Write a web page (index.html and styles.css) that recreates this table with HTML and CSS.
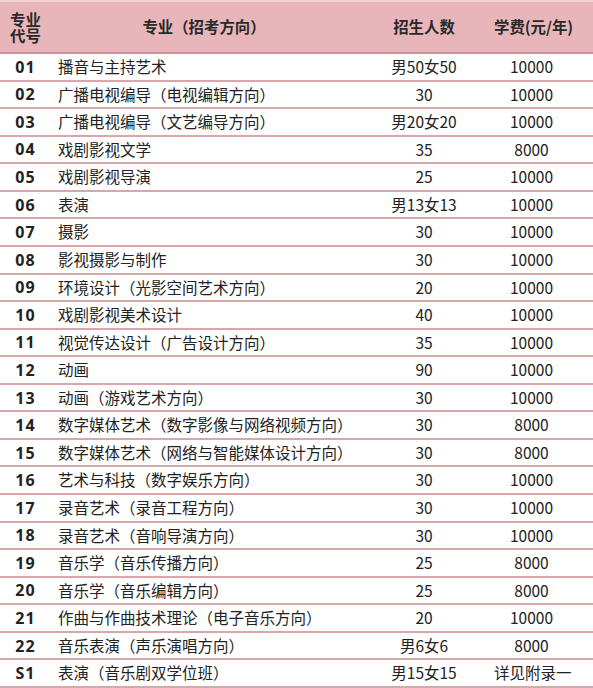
FILE: index.html
```html
<!DOCTYPE html>
<html lang="zh">
<head>
<meta charset="utf-8">
<link rel="stylesheet" href="styles.css">
</head>
<body>
<div class="table">
  <div class="row head">
    <div class="c code"><div class="two"><div>专业</div><div>代号</div></div></div>
    <div class="c name-h">专业（招考方向）</div>
    <div class="c num">招生人数</div>
    <div class="c fee">学费(元/年)</div>
  </div>
  <div class="row"><div class="c code">01</div><div class="c name">播音与主持艺术</div><div class="c num">男50女50</div><div class="c fee">10000</div></div>
  <div class="row"><div class="c code">02</div><div class="c name">广播电视编导（电视编辑方向）</div><div class="c num">30</div><div class="c fee">10000</div></div>
  <div class="row"><div class="c code">03</div><div class="c name">广播电视编导（文艺编导方向）</div><div class="c num">男20女20</div><div class="c fee">10000</div></div>
  <div class="row"><div class="c code">04</div><div class="c name">戏剧影视文学</div><div class="c num">35</div><div class="c fee">8000</div></div>
  <div class="row"><div class="c code">05</div><div class="c name">戏剧影视导演</div><div class="c num">25</div><div class="c fee">10000</div></div>
  <div class="row"><div class="c code">06</div><div class="c name">表演</div><div class="c num">男13女13</div><div class="c fee">10000</div></div>
  <div class="row"><div class="c code">07</div><div class="c name">摄影</div><div class="c num">30</div><div class="c fee">10000</div></div>
  <div class="row"><div class="c code">08</div><div class="c name">影视摄影与制作</div><div class="c num">30</div><div class="c fee">10000</div></div>
  <div class="row"><div class="c code">09</div><div class="c name">环境设计（光影空间艺术方向）</div><div class="c num">20</div><div class="c fee">10000</div></div>
  <div class="row"><div class="c code">10</div><div class="c name">戏剧影视美术设计</div><div class="c num">40</div><div class="c fee">10000</div></div>
  <div class="row"><div class="c code">11</div><div class="c name">视觉传达设计（广告设计方向）</div><div class="c num">35</div><div class="c fee">10000</div></div>
  <div class="row"><div class="c code">12</div><div class="c name">动画</div><div class="c num">90</div><div class="c fee">10000</div></div>
  <div class="row"><div class="c code">13</div><div class="c name">动画（游戏艺术方向）</div><div class="c num">30</div><div class="c fee">10000</div></div>
  <div class="row"><div class="c code">14</div><div class="c name">数字媒体艺术（数字影像与网络视频方向）</div><div class="c num">30</div><div class="c fee">8000</div></div>
  <div class="row"><div class="c code">15</div><div class="c name">数字媒体艺术（网络与智能媒体设计方向）</div><div class="c num">30</div><div class="c fee">8000</div></div>
  <div class="row"><div class="c code">16</div><div class="c name">艺术与科技（数字娱乐方向）</div><div class="c num">30</div><div class="c fee">10000</div></div>
  <div class="row"><div class="c code">17</div><div class="c name">录音艺术（录音工程方向）</div><div class="c num">30</div><div class="c fee">10000</div></div>
  <div class="row"><div class="c code">18</div><div class="c name">录音艺术（音响导演方向）</div><div class="c num">30</div><div class="c fee">10000</div></div>
  <div class="row"><div class="c code">19</div><div class="c name">音乐学（音乐传播方向）</div><div class="c num">25</div><div class="c fee">8000</div></div>
  <div class="row"><div class="c code">20</div><div class="c name">音乐学（音乐编辑方向）</div><div class="c num">25</div><div class="c fee">8000</div></div>
  <div class="row"><div class="c code">21</div><div class="c name">作曲与作曲技术理论（电子音乐方向）</div><div class="c num">20</div><div class="c fee">10000</div></div>
  <div class="row"><div class="c code">22</div><div class="c name">音乐表演（声乐演唱方向）</div><div class="c num">男6女6</div><div class="c fee">8000</div></div>
  <div class="row"><div class="c code">S1</div><div class="c name">表演（音乐剧双学位班）</div><div class="c num">男15女15</div><div class="c fee">详见附录一</div></div>
</div>
</body>
</html>
```
FILE: styles.css
```css
html, body {
  margin: 0;
  padding: 0;
  background: #ffffff;
}
body {
  width: 593px;
  height: 688px;
  overflow: hidden;
  font-family: "Noto Sans CJK SC", "Noto Sans", sans-serif;
  color: #222222;
}
.table {
  display: flex;
  flex-direction: column;
}
.row {
  display: grid;
  grid-template-columns: 50px 304px 140px 99px;
  height: 27.57px;
  box-sizing: border-box;
  border-bottom: 2px solid #d9a6aa;
  align-items: center;
  font-size: 15.5px;
  line-height: 1;
}
.row.head {
  height: 54px;
  background: #e8b6ba;
  border-top: 2px solid #f1d2d4;
  border-bottom: 2px solid #cf9297;
  font-weight: 700;
  font-size: 15.4px;
  color: #2a2a2a;
}
.c {
  white-space: nowrap;
}
.code {
  text-align: center;
  font-weight: 700;
  font-family: "Open Sans", "Noto Sans", sans-serif;
  font-size: 16px;
  letter-spacing: 1px;
  padding-left: 1px;
}
.head .code {
  font-family: "Noto Sans CJK SC", sans-serif;
  font-size: 15.4px;
  letter-spacing: 0;
}
.two {
  display: inline-flex;
  flex-direction: column;
  gap: 0;
  line-height: 16px;
}
.name {
  padding-left: 8px;
}
.name-h {
  text-align: center;
  padding-left: 4px;
}
.num {
  text-align: center;
}
.fee {
  text-align: center;
  padding-right: 24px;
}
```
